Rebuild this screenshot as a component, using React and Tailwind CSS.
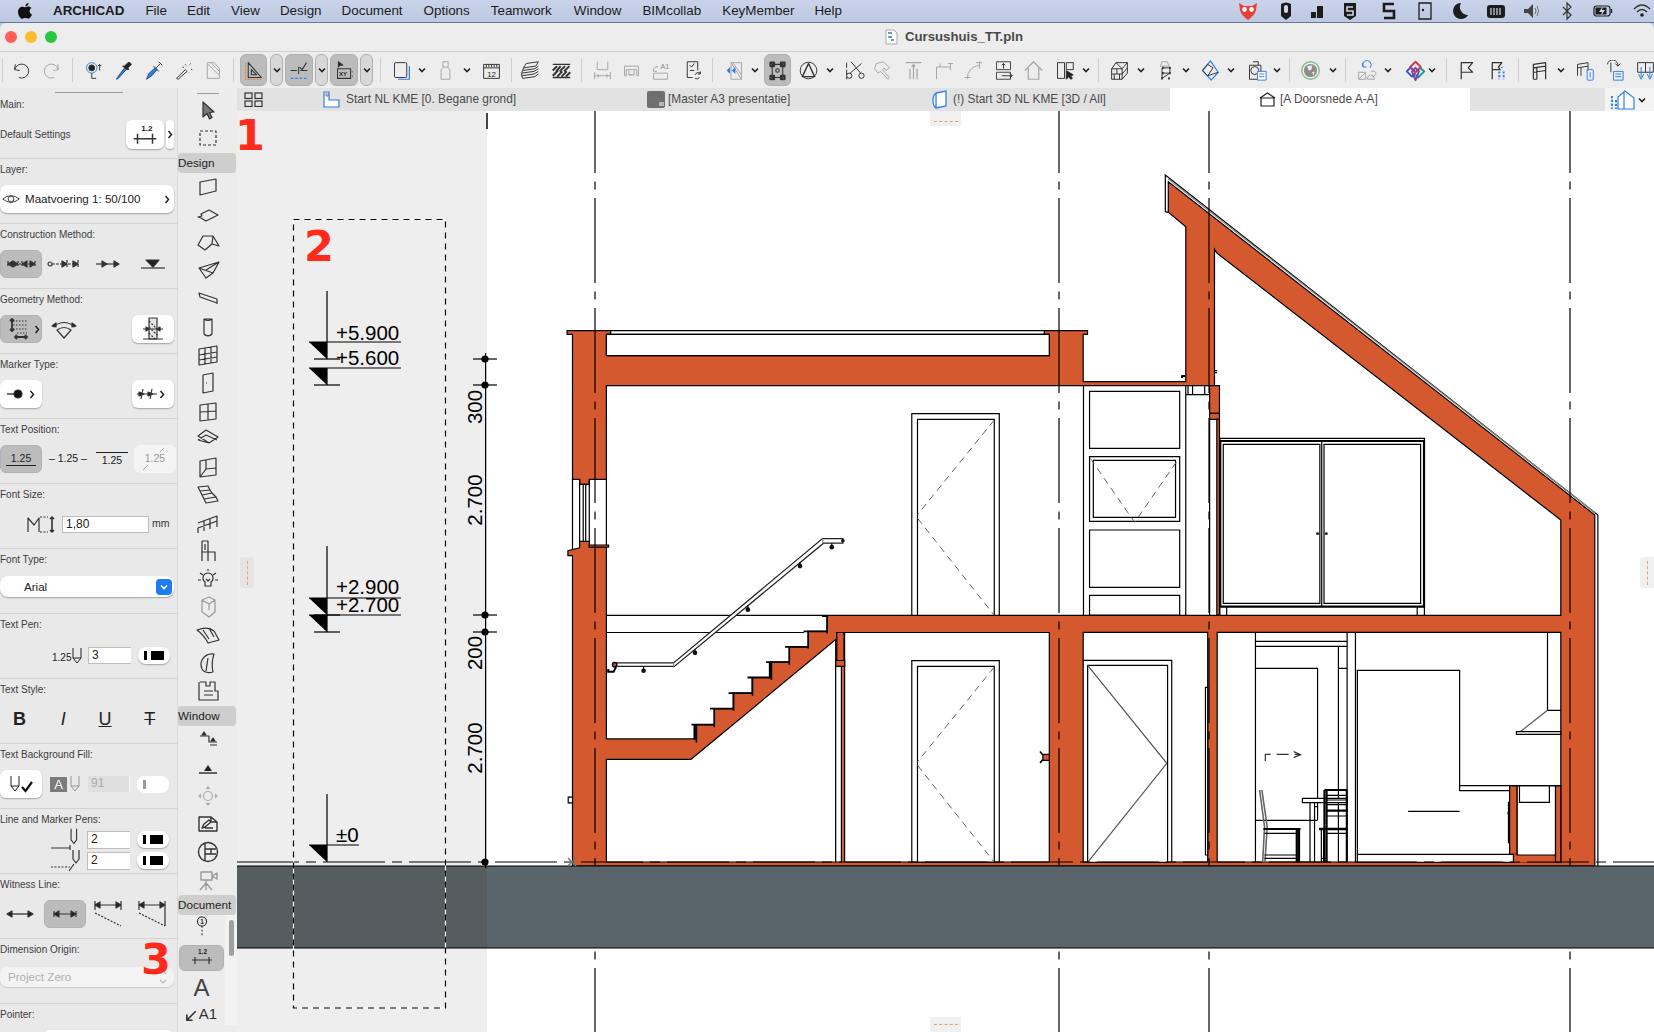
import React from "react";

const F = "font-['Liberation_Sans',Arial,sans-serif]";
const Z8 = "matrix(.357143 0 0 .357143 560 320)";
const Z9 = "matrix(.378788 0 0 .333333 1060 160)";
const Z10 = "matrix(.378788 0 0 .333333 1060 600)";
const OR = "#d4592f";

const Ic = ({ children, s = 24, vb = 24, w = 1.2, className = "" }) => (
  <svg width={s} height={s} viewBox={`0 0 ${vb} ${vb}`} fill="none" stroke="#333" strokeWidth={w} strokeLinejoin="round" className={`shrink-0 ${className}`}>
    {children}
  </svg>
);
const Chev = ({ ml = "" }) => (
  <svg width="10" height="10" viewBox="0 0 10 10" fill="none" stroke="#222" strokeWidth="1.6" className={`shrink-0 ${ml}`}><path d="M2 3.5 L5 6.5 L8 3.5" /></svg>
);
const Sep = ({ ml = "" }) => <div className={`w-px h-[24px] bg-[#cfcfcf] shrink-0 ${ml}`} />;
const G = "#a6a6a6";
const B = "#2f7fe6";

const I = {
  undo: <path d="M5 5 L4 11 L10 12 M4.5 10.5 A8 8 0 1 1 9 20" />,
  redo: <path stroke={G} d="M19 5 L20 11 L14 12 M19.5 10.5 A8 8 0 1 0 15 20" />,
  mag: <><circle cx="10" cy="9" r="6" stroke={B} /><circle cx="10" cy="9" r="3.4" fill="#222" /><path d="M10 15 V21 H15 M19 5 V12 M17 7 L19 5 L21 7" /></>,
  drop: <><path d="M5 20 L4 22 L6 21 L16 10 L14 8 Z" fill={B} stroke="#1d4f92" /><path d="M13 7 L17 3 Q20 2 21 5 L17 9 L18 11 L16 11 L11 7 Z" fill="#222" /></>,
  syr: <><path d="M4 22 L7 15 L14 9 L16 11 L10 18 Z" fill={B} stroke="#1d4f92" /><path d="M12 7 L18 13 M15 9 L20 4 M18 2 L22 6" /></>,
  wand: <><path d="M4 21 L14 11 L16 13 L6 22 Z" /><path strokeDasharray="1.5 2" d="M14 5 L16 8 M20 4 L18 7 M22 11 L19 10 M11 8 L14 9" /></>,
  pin: <path stroke={G} d="M6 4 V21 H20 V10 L14 3 H6 M6 4 L20 18 M10 3 L20 13" />,
  tri: <><path d="M6 3 V20 H21 Z M9.5 11 V16.8 H15.5 Z" /><path stroke="#e8772e" strokeDasharray="2 1.5" d="M3 3 V22 H22" /></>,
  snap: <><path d="M2 12 H9 M13 12 H21 M11 8 V16 M12 8 L15 11 L20 3" /><path stroke={B} strokeDasharray="3 2" d="M2 21 H22" /></>,
  xy: <><path d="M5 2 V8 L7 6 L10 6 Z" fill="#222" /><rect x="4" y="10" width="15" height="11" /><text x="5.6" y="18.5" fontSize="7" fontWeight="700" fontFamily="Liberation Sans" fill="#222" stroke="none">XY</text><path d="M21 13 V14 M21 18 V19" /></>,
  sq: <><rect x="4" y="3" width="14" height="17" rx="1.5" /><path stroke={B} strokeWidth="1.4" d="M21 7 V22 H8" /></>,
  pers: <path stroke={G} d="M9 2 H15 V8 H9 Z M10 8 L7 11 V22 H17 V11 L14 8" />,
  rul: <><rect x="3" y="5" width="18" height="16" /><path d="M3 9 H21 M6 5 V8 M9 5 V8 M12 5 V8 M15 5 V8 M18 5 V8" /><text x="7" y="19" fontSize="9" fontFamily="Liberation Sans" fill="#222" stroke="none">12</text></>,
  lay: <path d="M7 4 L21 2 L18 7 L4 9 Z M4 9 L3 12 L17 10 L21 7 M3 12 L2 15 L16 13 L21 10 M2 15 L2 18 L16 16 L21 13 M2 18 L3 21 L17 19 L21 16" />,
  hat: <><path strokeWidth="1.5" d="M2 5 H22 M2 20 H22" /><path strokeWidth="2.4" d="M2 12 L7 7 M6 13 L11 7 M10 13 L16 7 M15 13 L21 7 M2 18 L8 12 M7 19 L13 13 M12 19 L18 13 M17 19 L22 14" /></>,
  g1: <path stroke={G} d="M6 2 V11 H18 V2 M3 18 H21 M3 14 V22 M21 14 V22 M7 16 V20 M17 16 V20" />,
  g2: <path stroke={G} d="M4 7 H20 V18 H18 V11 H6 V18 H4 Z M9 12 V17 H15 V12 M9 17 H15" />,
  g3: <><path stroke={G} d="M4 15 H20 V22 H4 Z M4 10 L8 7 M4 10 L4 13 H8 M8 7 V9" /><text x="12" y="10" fontSize="8" fontFamily="Liberation Sans" fill="#888" stroke="none">A1</text></>,
  note: <><path d="M6 2 H18 V12 M6 2 V20 H12" /><path d="M9 6 L11 8 L14 4 M9 12 H14 M15 17 A4 4 0 0 1 21 15 M21 13 V16 H18 M20 20 A4 4 0 0 1 15 21" /></>,
  mir: <><path stroke={G} d="M8 3 H20 V22 H8 Z M8 3 L20 22 M10 3 L20 17" /><path d="M3 12 L7 8 V16 Z M9 12 L13 8 V16 Z" fill={B} stroke="none" /></>,
  nod: <><rect x="6" y="5" width="12" height="15" /><circle cx="12" cy="12" r="2" /><path strokeWidth="2.5" d="M4 3 H8 V7 H4 Z M16 3 H20 V7 H16 Z M4 18 H8 V22 H4 Z M16 18 H20 V22 H16 Z" /></>,
  circ: <><circle cx="12" cy="12" r="9.5" /><path strokeWidth="1.6" d="M12 4 L5 19 H19 Z" /></>,
  sci: <><path d="M3 3 V22" strokeDasharray="6 2" /><path d="M8 2 L19 15 M20 4 L7 15" /><circle cx="20" cy="18" r="3" /><circle cx="6" cy="18" r="3" /></>,
  ham: <path stroke={G} d="M5 4 L13 2 L20 9 L16 12 L14 9 L12 11 L20 20 L18 22 L10 13 L7 15 L3 10 Z" />,
  fan: <path stroke={G} strokeWidth="1.4" d="M3 3 H21 M12 5 V22 M8 10 V22 M16 10 V22 M12 5 L10 8 M12 5 L14 8" />,
  cor: <path stroke={G} d="M4 22 V8 H20 M8 8 V4 M20 4 V12 M17 4 H23" />,
  arc: <path stroke={G} d="M6 22 Q6 8 20 6 M20 2 V10 M16 3 L23 3 M3 20 H10" />,
  ext: <><path stroke="#444" d="M4 2 H20 V11 H4 Z M4 14 H20 V22 H4 Z" /><path d="M12 10 V4 M10 6 L12 4 L14 6 M10 18 H22 M19 15 L22 18 L19 21" /></>,
  hou: <path stroke={G} strokeWidth="1.4" d="M2 12 L12 2 L22 12 M6 9 V22 H18 V9" />,
  pick: <><path d="M4 3 H12 V21 H4 Z M14 3 H22 V11 H14 Z" /><path d="M14 12 V22 L17 19 L19 22 L21 21 L19 18 L22 17 Z" fill="#222" /></>,
  brick: <path d="M3 10 L8 3 H21 V15 L15 22 H3 Z M3 10 H15 V22 M15 10 L21 3 M3 16 H15 M9 10 V16 M6 16 V22 M12 16 V22 M15 16 L21 9 M8 3 L15 10" />,
  morph: <><path stroke={G} d="M8 2 L14 2 L16 7 H6 Z" /><path strokeWidth="2.4" d="M8 9 H10 M16 9 H18 M8 15 H10 M16 15 H18 M7 21 H9 M15 21 H17" /><path d="M8 9 L8 21 M17 9 V15 M8 9 H17 M8 15 H17 M8 21 L17 15" /></>,
  dia: <><path stroke={B} strokeWidth="1.4" d="M13 1 L22 14 L14 23 L4 12 Z" /><path d="M4 12 L10 5 L16 9 L10 18 Z M10 18 L22 14" /></>,
  cam: <><path d="M8 2 H14 V6 M4 6 H17 V22 H4 Z" /><circle cx="10" cy="12" r="4.5" /><rect x="13" y="13" width="10" height="10" fill="#fff" stroke={B} /><path stroke={B} d="M15 16 H21 M15 19 H21" /></>,
  glob: <><circle cx="12" cy="12" r="10" stroke="#7fbf8f" strokeWidth="1.5" /><circle cx="12" cy="12" r="7.5" fill="#8d8d8d" stroke="none" /><path fill="#eee" stroke="none" d="M8 7 L14 6 L13 11 L10 12 Z M14 14 L17 13 L15 18 Z" /></>,
  rot: <><path stroke={G} d="M3 14 H11 V22 H3 Z M3 22 L11 14 M17 14 A3 3 0 1 1 17 17 A5 5 0 0 1 21 22 H13 A5 5 0 0 1 16 17" /><path stroke={B} d="M8 8 A5 5 0 1 1 16 9 M8 3 V8 H12" /></>,
  bim: <><path stroke="#d8344a" strokeWidth="2.2" d="M12 2 L18 8 L12 14 L6 8 Z" /><path stroke="#3b56c8" strokeWidth="2.2" d="M7 8 L2 13 L8 19 L12 15" /><path stroke="#19a08a" strokeWidth="2.2" d="M17 9 L22 13 L15 20 L12 17" /><path stroke="#7a3fb0" strokeWidth="2.2" d="M8 13 L12 9 L16 13 L12 23 Z" /></>,
  flag: <path strokeWidth="1.4" d="M6 22 V3 H19 L14 9 L19 14 H6" />,
  flag2: <><path strokeWidth="1.4" d="M6 22 V3 H17 L13 8 L15 11 H6" /><path stroke={B} strokeWidth="2.2" strokeDasharray="2.4 1.8" d="M14 13 V22 M19 13 V22 M17 8 V9" /></>,
  shelf: <path strokeWidth="1.4" d="M5 22 V5 L19 3 V22 M5 9 L19 7 M5 14 L19 12 M9 22 V8 M5 22 H9" />,
  shelf2: <><path d="M4 18 V5 L16 3 V12 M4 9 L16 7 M8 18 V8" /><rect x="15" y="11" width="7" height="12" rx="1" stroke={B} /><path stroke={B} d="M18.5 14 V20" /></>,
  rf: <><path d="M9 3 V14 M5 5 A6 6 0 0 1 17 7 M14 4 L17 7 L20 4" /><rect x="12" y="13" width="11" height="10" stroke={B} /><path stroke={B} d="M14 16 H21 M14 19 H21" /></>,
  shv: <><path d="M3 3 H21 V14 H3 Z M12 3 V14" /><path stroke={B} d="M4 16 L7 22 L10 16 M14 16 L17 22 L20 16 M7 8 V20 M17 8 V20" /></>,
};
const sel = "bg-[#bcbcbc] rounded-[6px] border border-[#b0b0b0] h-[32px] flex items-center justify-center shrink-0";
const TB = ({ n, ml = "" }) => <div className={`w-[24px] flex justify-center shrink-0 ${ml}`}><Ic s={21} w={1.1}>{I[n]}</Ic></div>;

function Toolbar() {
  return (
    <div className="h-[36px] bg-[#ededed] flex items-center overflow-hidden">
      <Sep ml="ml-[2px]" /><TB n="undo" ml="ml-[6px]" /><TB n="redo" ml="ml-[6px]" /><Sep ml="ml-[9px]" />
      <TB n="mag" ml="ml-[8px]" /><TB n="drop" ml="ml-[6px]" /><TB n="syr" ml="ml-[6px]" /><TB n="wand" ml="ml-[6px]" /><TB n="pin" ml="ml-[5px]" /><Sep ml="ml-[9px]" />
      <div className={`${sel} w-[27px] ml-[6px]`}><Ic s={21}>{I.tri}</Ic></div>
      <div className={`${sel} w-[13px] ml-[3px] bg-[#d8d8d8]`}><Chev /></div>
      <div className={`${sel} w-[28px] ml-[2px]`}><Ic s={21}>{I.snap}</Ic></div>
      <div className={`${sel} w-[13px] ml-[2px] bg-[#d8d8d8]`}><Chev /></div>
      <div className={`${sel} w-[28px] ml-[2px]`}><Ic s={21}>{I.xy}</Ic></div>
      <div className={`${sel} w-[13px] ml-[2px] bg-[#d8d8d8]`}><Chev /></div>
      <Sep ml="ml-[7px]" />
      <TB n="sq" ml="ml-[8px]" /><Chev ml="ml-[4px]" /><TB n="pers" ml="ml-[6px]" /><Chev ml="ml-[5px]" /><TB n="rul" ml="ml-[7px]" /><Sep ml="ml-[8px]" />
      <TB n="lay" ml="ml-[6px]" /><TB n="hat" ml="ml-[7px]" /><Sep ml="ml-[8px]" />
      <TB n="g1" ml="ml-[8px]" /><TB n="g2" ml="ml-[5px]" /><TB n="g3" ml="ml-[5px]" /><TB n="note" ml="ml-[8px]" /><Sep ml="ml-[8px]" />
      <TB n="mir" ml="ml-[9px]" /><Chev ml="ml-[4px]" />
      <div className={`${sel} w-[27px] ml-[4px]`}><Ic s={21}>{I.nod}</Ic></div>
      <TB n="circ" ml="ml-[5px]" /><Chev ml="ml-[5px]" />
      <TB n="sci" ml="ml-[7px]" /><TB n="ham" ml="ml-[4px]" /><TB n="fan" ml="ml-[7px]" /><TB n="cor" ml="ml-[6px]" /><TB n="arc" ml="ml-[5px]" /><TB n="ext" ml="ml-[7px]" /><TB n="hou" ml="ml-[6px]" /><TB n="pick" ml="ml-[7px]" /><Chev ml="ml-[5px]" /><Sep ml="ml-[7px]" />
      <TB n="brick" ml="ml-[8px]" /><Chev ml="ml-[5px]" /><TB n="morph" ml="ml-[7px]" /><Chev ml="ml-[4px]" /><TB n="dia" ml="ml-[6px]" /><Chev ml="ml-[5px]" /><TB n="cam" ml="ml-[8px]" /><Chev ml="ml-[4px]" /><Sep ml="ml-[7px]" />
      <TB n="glob" ml="ml-[8px]" /><Chev ml="ml-[6px]" /><Sep ml="ml-[7px]" />
      <TB n="rot" ml="ml-[8px]" /><Chev ml="ml-[5px]" /><TB n="bim" ml="ml-[10px]" /><Chev /><Sep ml="ml-[9px]" />
      <TB n="flag" ml="ml-[7px]" /><TB n="flag2" ml="ml-[7px]" /><Sep ml="ml-[9px]" />
      <TB n="shelf" ml="ml-[8px]" /><Chev ml="ml-[5px]" /><TB n="shelf2" ml="ml-[6px]" /><TB n="rf" ml="ml-[5px]" /><TB n="shv" ml="ml-[8px]" />
    </div>
  );
}

function MenuBar() {
  const items = [["File", "ml-[21px]"], ["Edit", "ml-[20px]"], ["View", "ml-[21px]"], ["Design", "ml-[20px]"], ["Document", "ml-[20px]"], ["Options", "ml-[21px]"], ["Teamwork", "ml-[21px]"], ["Window", "ml-[22px]"], ["BIMcollab", "ml-[21px]"], ["KeyMember", "ml-[21px]"], ["Help", "ml-[20px]"]];
  const S = ({ children, ml }) => <svg width="20" height="20" viewBox="0 0 20 20" className={`shrink-0 ${ml}`} fill="#1c1c1c" stroke="none">{children}</svg>;
  return (
    <div className={`h-[23px] bg-gradient-to-b from-[#c9d3e9] to-[#bdc9e2] border-b border-[#6f7892] flex items-center text-[13.4px] text-[#1c1c1c] overflow-hidden ${F}`}>
      <svg width="16" height="18" viewBox="0 0 16 18" className="ml-[17px] shrink-0" fill="#111"><path d="M11.5 1 C11.6 2.6 10.2 4.4 8.4 4.3 C8.3 2.7 9.9 1.1 11.5 1 Z M8.3 5.2 C9.2 5.2 10.2 4.4 11.6 4.5 C12.7 4.5 13.8 5.1 14.4 6.1 C11.7 7.7 12.2 11.4 15 12.5 C14.4 14 12.9 16.8 11.3 16.8 C10.2 16.8 9.6 16.1 8.3 16.1 C7 16.1 6.4 16.8 5.3 16.8 C3.3 16.8 1 12.9 1 9.9 C1 6.8 3.1 4.7 5.1 4.7 C6.4 4.7 7.4 5.2 8.3 5.2 Z" /></svg>
      <span className="ml-[20px] font-bold text-[13.4px]">ARCHICAD</span>
      {items.map(([t, m]) => <span key={t} className={m}>{t}</span>)}
      <div className="flex-1" />
      <div className="flex items-center pr-[2px]">
        <S><path fill="#ee3b33" d="M1 2 L6 5 H14 L19 2 L18 9 Q17 14 10 19 Q3 14 2 9 Z" /><circle cx="6.5" cy="8.5" r="2.4" fill="#fff" /><circle cx="13.5" cy="8.5" r="2.4" fill="#fff" /></S>
        <S ml="ml-[18px]"><path d="M5 3 Q10 0 15 3 V15 L10 19 L5 15 Z" /><rect x="8" y="4" width="4" height="8" rx="2" fill="#ccd6ea" /></S>
        <S ml="ml-[11px]"><path d="M4 11 H9 V17 H4 Z M10 5 H16 V17 H10 Z M10 11 L16 5 V11 Z" /></S>
        <S ml="ml-[13px]"><path d="M4 2 H16 V15 L10 19 L4 15 Z" /><path stroke="#ccd6ea" strokeWidth="1.6" fill="none" d="M13 6 H7 V10 H13 V14 H7" /></S>
        <S ml="ml-[19px]"><path fill="none" stroke="#1c1c1c" strokeWidth="2.6" d="M15 3 H5 V10 H15 V17 H5" /></S>
        <S ml="ml-[16px]"><path fill="none" stroke="#1c1c1c" strokeWidth="1.3" d="M4 2 H16 V18 H4 Z" /><circle cx="8" cy="9" r="1.2" /></S>
        <S ml="ml-[15px]"><path d="M11 2 A8 8 0 1 0 18 14 A8 8 0 0 1 11 2 Z" /></S>
        <S ml="ml-[16px]"><rect x="1" y="4" width="18" height="13" rx="3" /><path stroke="#ccd6ea" strokeWidth="1.2" d="M5 7 V14 M8 7 V14 M11 7 V14 M14 7 V14" /></S>
        <S ml="ml-[16px]"><path fill="#444" d="M2 8 H6 L11 3 V17 L6 12 H2 Z" /><path fill="none" stroke="#777" d="M13 7 Q15 10 13 13 M15 5 Q18 10 15 15" /></S>
        <S ml="ml-[15px]"><path fill="none" stroke="#333" strokeWidth="1.2" d="M6 6 L14 14 L10 18 V2 L14 6 L6 14" /></S>
        <S ml="ml-[16px]"><rect x="1" y="5" width="16" height="10" rx="2.5" fill="none" stroke="#1c1c1c" strokeWidth="1.2" /><rect x="2.5" y="6.5" width="11" height="7" /><path fill="#ccd6ea" d="M10 5 L6 11 H9 L8 15 L12 9 H9 Z" /><rect x="18" y="8" width="1.2" height="4" /></S>
        <S ml="ml-[19px]"><path fill="none" stroke="#333" strokeWidth="1.6" d="M2 8 Q10 0 18 8 M5 11 Q10 6 15 11" /><circle cx="10" cy="14" r="1.8" /></S>
      </div>
    </div>
  );
}

const Lab = ({ children }) => <div className="h-[22px] pt-[5px] text-[10px] leading-[12px] text-[#3c3c3c] whitespace-nowrap">{children}</div>;
const Sec = ({ label, children, body = "mt-[4px] h-[28px] flex items-center" }) => (
  <div className="h-[65px] border-b border-[#d2d2d2] shrink-0">
    <Lab>{label}</Lab>
    <div className={body}>{children}</div>
  </div>
);
const wb = "bg-white rounded-[6px] shadow-[0_1px_1.5px_rgba(0,0,0,0.3)] flex items-center justify-center shrink-0";
const sb = "bg-[#bcbcbc] rounded-[6px] border border-[#b2b2b2] flex items-center justify-center shrink-0";
const inp = "bg-white border-t border-b border-[#bdbdbd] text-[12px] text-[#222] leading-[14px] pl-[3px] shrink-0";
const Pen = ({ ml = "ml-[7px]", off }) => (
  <div className={`${wb} w-[32px] h-[17px] rounded-[8px] gap-[4px] ${ml} ${off ? "bg-[#f0f0f0] shadow-none" : ""}`}>
    <div className={`w-[3px] h-[9px] ${off ? "bg-[#999]" : "bg-black"}`} />
    <div className={`w-[13px] h-[9px] ${off ? "bg-white" : "bg-black"}`} />
  </div>
);

function Panel() {
  return (
    <div className={`w-[178px] shrink-0 bg-[#e9e9e9] border-r border-[#dcdcdc] overflow-hidden ${F}`}>
      <div className="h-[6px] flex justify-center"><div className="mt-[4px] w-[68px] h-px bg-[#9c9c9c]" /></div>
      <Sec label="Main:" body="mt-[4px] h-[29px] flex items-center">
        <span className="text-[10px] text-[#3c3c3c] w-[126px]">Default Settings</span>
        <div className={`${wb} w-[38px] h-[29px]`}><Ic s={30}><text x="9" y="9" fontSize="6.5" fontWeight="700" fontFamily="Liberation Sans" fill="#222" stroke="none">1.2</text><path d="M3 15 H21 M6 11 V19 M18 11 V19" /></Ic></div>
        <div className={`${wb} w-[8px] h-[29px] ml-[2px]`}><Chev2 /></div>
      </Sec>
      <Sec label="Layer:">
        <div className={`${wb} w-[174px] h-[28px] justify-start rounded-[7px]`}>
          <Ic s={18} className="ml-[2px]"><path d="M1 12 Q12 3 23 12 Q12 21 1 12 Z" /><circle cx="12" cy="12" r="3.8" /></Ic>
          <span className="ml-[5px] text-[11.6px] text-[#222] whitespace-nowrap">Maatvoering 1: 50/100</span>
          <div className="flex-1" /><Chev2 cl="mr-[4px]" />
        </div>
      </Sec>
      <Sec label="Construction Method:">
        <div className={`${sb} w-[42px] h-[28px]`}><Ic s={34} vb={34}><path d="M3 17 H31 M4 14 V20 M14 14 V20 M18 14 V20 M31 14 V20" strokeDasharray="2 1" /><path fill="#333" d="M4 17 L9 14 V20 Z M14 17 L9 14 V20 Z M18 17 L23 14 V20 Z M31 17 L26 14 V20 Z" /></Ic></div>
        <Ic s={34} vb={34} className="ml-[5px]"><circle cx="3" cy="17" r="2" /><path d="M5 17 H30 M20 13 V21 M31 13 V21" strokeDasharray="3 1" /><path fill="#333" d="M20 17 L15 14 V20 Z M31 17 L26 14 V20 Z" /></Ic>
        <Ic s={26} vb={26} className="ml-[14px]"><path d="M1 13 H24" /><path fill="#333" d="M12 13 L7 10 V16 Z M24 13 L19 10 V16 Z" /></Ic>
        <Ic s={26} vb={26} className="ml-[19px]"><path d="M1 17 H25" /><path fill="#222" d="M6 9 H19 L13 16 Z" /></Ic>
      </Sec>
      <Sec label="Geometry Method:">
        <div className={`${sb} w-[42px] h-[28px] justify-start`}><Ic s={26} vb={26} className="ml-[6px]"><path strokeDasharray="1.5 1.5" d="M6 5 H20 M6 9 H20 M6 13 H20 M10 17 H20" /><path strokeWidth="1.8" d="M5 3 V15 M3 5 L5 3 L7 5 M3 13 L5 15 L7 13 M8 21 H20 M10 19 L8 21 L10 23 M18 19 L20 21 L18 23" /></Ic><Chev2 cl="ml-[1px]" /></div>
        <Ic s={26} vb={26} className="ml-[9px]"><path d="M2 11 Q13 2 24 11 M6 14 L13 22 L20 14 Q13 9 6 14 Z" /><path fill="#222" d="M1 10 L5 7 L5 11 Z M25 10 L21 7 L21 11 Z" /></Ic>
        <div className="ml-[55px]"><div className={`${wb} w-[42px] h-[28px]`}><Ic s={26} vb={26}><path d="M9 2 H17 V23 H9 Z" fill="#e5e5e5" /><path strokeDasharray="2 1.5" d="M9 5 L17 13 M9 11 L17 19 M9 17 L15 23" /><path d="M3 23 H23 M3 13 H23" /><path fill="#222" d="M9 13 L6 11 V15 Z M17 13 L20 11 V15 Z" /></Ic></div></div>
      </Sec>
      <Sec label="Marker Type:">
        <div className={`${wb} w-[42px] h-[28px] justify-start`}><Ic s={20} vb={20} className="ml-[6px]"><path strokeWidth="1.4" d="M1 10 H10" /><circle cx="12" cy="10" r="4" fill="#111" /></Ic><Chev2 cl="ml-[3px]" /></div>
        <div className="ml-[90px]"><div className={`${wb} w-[42px] h-[28px] justify-start`}><Ic s={24} vb={24} className="ml-[3px]"><path d="M2 12 H22 M8 7 L6 17 M17 7 L15 17" /><path fill="#222" d="M9 12 L4 10 V14 Z M18 12 L13 10 V14 Z" /></Ic><Chev2 /></div></div>
      </Sec>
      <Sec label="Text Position:">
        <div className={`${sb} w-[42px] h-[28px] flex-col text-[10.5px] text-[#222] leading-[10px]`}><span>1.25</span><div className="w-[30px] h-px bg-[#222] mt-[2px]" /></div>
        <span className="ml-[7px] text-[10.5px] text-[#222] whitespace-nowrap">– 1.25 –</span>
        <div className="ml-[9px] flex flex-col items-center text-[10.5px] text-[#222] leading-[11px]"><div className="w-[32px] h-px bg-[#222] mb-[2px]" /><span>1.25</span></div>
        <div className="ml-[6px] w-[42px] h-[28px] rounded-[6px] bg-[#f4f4f4] shrink-0 relative flex items-center justify-center text-[10.5px] text-[#999]"><span>1.25</span><svg className="absolute inset-0" width="42" height="28" viewBox="0 0 42 28" stroke="#aaa"><path d="M30 3 L26 7 M14 20 L9 25" /></svg></div>
      </Sec>
      <Sec label="Font Size:">
        <Ic s={30} vb={30} className="ml-[26px]"><path d="M2 23 V9 L8 16 L13 9 V23" /><path strokeDasharray="2 1.5" d="M14 8 H22 M14 23 H22" /><path strokeWidth="1.6" d="M26 8 V23 M24 10 L26 8 L28 10 M24 21 L26 23 L28 21" /></Ic>
        <div className={`${inp} w-[87px] h-[17px] ml-[6px] border-l border-r`}>1,80</div>
        <span className="ml-[3px] text-[10.5px] text-[#333]">mm</span>
      </Sec>
      <Sec label="Font Type:" body="mt-[5px] h-[21px] flex items-center">
        <div className={`${wb} w-[174px] h-[21px] justify-start rounded-[8px] text-[11.6px] text-[#222]`}>
          <span className="ml-[24px]">Arial</span><div className="flex-1" />
          <div className="w-[16px] h-[16px] mr-[2px] rounded-[4px] bg-[#1f7cf0] flex items-center justify-center"><svg width="10" height="10" viewBox="0 0 10 10" fill="none" stroke="#fff" strokeWidth="1.6"><path d="M2 3.5 L5 6.5 L8 3.5" /></svg></div>
        </div>
      </Sec>
      <Sec label="Text Pen:" body="mt-[11px] h-[17px] flex items-center">
        <span className="ml-[52px] w-[18px] text-[10px] text-[#222] mt-[3px]">1.25</span>
        <PenIcon cl="ml-[1px]" />
        <div className={`${inp} w-[43px] h-[17px] ml-[5px] border-l`}>3</div>
        <Pen />
      </Sec>
      <Sec label="Text Style:" body="mt-[9px] h-[18px] flex items-center text-[#222]">
        <span className="w-[40px] text-center text-[18px] font-bold leading-[18px]">B</span>
        <span className="w-[50px] text-center text-[18px] italic leading-[18px]">I</span>
        <span className="w-[36px] text-center text-[18px] underline leading-[18px]">U</span>
        <span className="w-[56px] text-center text-[18px] line-through leading-[18px]">T</span>
      </Sec>
      <Sec label="Text Background Fill:" body="mt-[4px] h-[28px] flex items-center">
        <div className={`${wb} w-[42px] h-[28px]`}><PenIcon /><svg width="12" height="12" viewBox="0 0 12 12" fill="none" stroke="#111" strokeWidth="2.2" className="mt-[5px]"><path d="M1 6 L4.5 10 L11 1" /></svg></div>
        <div className="ml-[8px] w-[17px] h-[15px] bg-[#7b7b7b] text-white text-[13px] leading-[15px] text-center shrink-0">A</div>
        <PenIcon cl="ml-[2px] opacity-40" />
        <div className="ml-[7px] w-[42px] h-[16px] bg-[#dfdfdf] border-r border-[#f5f5f5] text-[12px] leading-[15px] text-[#aaa] pl-[3px] shrink-0">91</div>
        <Pen off />
      </Sec>
      <Sec label="Line and Marker Pens:" body="-mt-[2px] h-[42px] flex flex-col">
        <div className="h-[21px] flex items-center">
          <Ic s={30} vb={30} className="ml-[50px] mt-[2px]"><path d="M1 22 H20 M20 19 V24" /><path d="M24 3 V15 L27 19 L30 15 V3" transform="translate(-1 0) scale(.92)" /></Ic>
          <div className={`${inp} w-[43px] h-[18px] ml-[7px] border-l`}>2</div>
          <Pen />
        </div>
        <div className="h-[21px] flex items-center">
          <Ic s={30} vb={30} className="ml-[50px]"><path strokeDasharray="2 1.5" d="M1 21 H20" /><path d="M19 25 L24 18 M23 4 V13 L26 17 L29 13 V4" /></Ic>
          <div className={`${inp} w-[43px] h-[18px] ml-[7px] border-l`}>2</div>
          <Pen />
        </div>
      </Sec>
      <Sec label="Witness Line:">
        <Ic s={30} vb={30} className="ml-[5px]"><path strokeWidth="1.3" d="M3 15 H27" /><path fill="#222" d="M2 15 L7 12 V18 Z M28 15 L23 12 V18 Z" /></Ic>
        <div className={`${sb} w-[42px] h-[28px] ml-[9px]`}><Ic s={28} vb={28}><path d="M3 14 H25 M3 11 V17 M25 11 V17" /><path fill="#222" d="M3 14 L8 11 V17 Z M25 14 L20 11 V17 Z" /></Ic></div>
        <Ic s={28} vb={28} className="ml-[8px]"><path d="M1 5 H27 M1 1 V10 M27 1 V10" /><path fill="#222" d="M1 5 L6 2 V8 Z M27 5 L22 2 V8 Z" /><path strokeDasharray="2 1.5" d="M1 13 L27 26" /></Ic>
        <Ic s={28} vb={28} className="ml-[16px]"><path d="M1 5 H27 M1 1 V10 M27 1 V26" /><path fill="#222" d="M1 5 L6 2 V8 Z M27 5 L22 2 V8 Z" /><path strokeDasharray="2 1.5" d="M1 13 L27 26" /></Ic>
      </Sec>
      <Sec label="Dimension Origin:" body="mt-[6px] h-[20px] flex items-center">
        <div className="w-[174px] h-[20px] rounded-[7px] bg-[#f3f3f3] shadow-[0_1px_1px_rgba(0,0,0,0.15)] flex items-center text-[11.6px] text-[#b0b0b0]">
          <span className="ml-[8px]">Project Zero</span><div className="flex-1" />
          <svg width="10" height="16" viewBox="0 0 10 16" fill="none" stroke="#bbb" strokeWidth="1.2" className="mr-[6px]"><path d="M2 5 L5 2 L8 5 M2 11 L5 14 L8 11" /></svg>
        </div>
      </Sec>
      <Sec label="Pointer:" body="mt-[4px] h-[28px] flex items-center"><div className={`${wb} ml-[44px] w-[130px] h-[28px]`} /></Sec>
    </div>
  );
}
function Chev2({ cl = "" }) {
  return <svg width="6" height="9" viewBox="0 0 6 9" fill="none" stroke="#222" strokeWidth="1.5" className={`shrink-0 ${cl}`}><path d="M1.5 1 L4.5 4.5 L1.5 8" /></svg>;
}
function PenIcon({ cl = "" }) {
  return <svg width="12" height="18" viewBox="0 0 12 18" fill="none" stroke="#222" strokeWidth="1" className={`shrink-0 ${cl}`}><path d="M2 1 V11 L6 16 L10 11 V1 M2 11 H10" /></svg>;
}

const T = [
  <path fill="#777" d="M7 4 L7 19 L11 15.5 L13.5 21 L16 19.5 L13.5 14.5 L18 14 Z" />,
  <rect x="4" y="5" width="16" height="14" strokeDasharray="3 2" />,
];
const T1 = [
  "M4 7 L20 4 V16 L4 20 Z",
  "M2 14 L6 13 L5 11 L13 7 L22 12 L10 18 L5 15 Z",
  "M7 5 H17 L23 15 L16 13 L9 19 L2 14 Z M17 5 L16 13",
  "M3 9 L23 3 L17 14 L10 19 L3 9 L17 14 M23 3 L10 11",
  "M3 6 L21 12 V16 L4 10 Z M21 16 V17",
  "M8 4 H16 V19 Q12 23 8 19 Z M8 4 Q12 7 16 4",
  "M3 6 L21 3 V19 L3 22 Z M3 12 L21 9 M3 17 L21 14 M9 5 V21 M15 4 V20",
  "M7 4 L17 2 V20 L7 22 Z M10 12 H11",
  "M4 6 L20 4 V20 L4 22 Z M12 5 V21 M4 13 L20 12",
  "M2 9 L10 3 L22 10 L13 16 Z M2 13 L10 8 M13 16 L2 13 M10 8 L21 13",
  "M4 6 L20 3 V20 L4 22 Z M10 5 V14 L20 13 M10 14 L4 22",
  "M2 4 L12 3 L14 7 L4 8 Z M4 8 L6 12 L16 10 L14 7 M6 12 L8 16 L20 14 L16 10 M8 16 L10 20 L22 18 L20 14",
  "M2 12 L21 5 V10 L2 17 V22 M8 10 V20 M14 8 V18 M21 5 V16",
  "M6 2 H12 V13 H19 V22 M6 2 V22 M6 13 H19 M12 13 V22 M9 5 V11",
  "M12 6 A5 5 0 0 1 15 15 V19 H9 V15 A5 5 0 0 1 12 6 Z M12 2 V4 M4 6 L7 8 M20 6 L17 8 M2 13 H5 M22 13 H19 M10 12 L12 14 L14 12",
  "M6 5 L13 2 L19 5 V17 L13 22 L6 17 Z M6 5 L13 9 L19 5 M13 9 V15",
  "M1 7 Q12 3 18 8 L23 17 L12 20 Q8 12 1 7 Z M7 7 L13 16 M13 5 L18 14",
  "M6 9 Q10 2 18 3 Q15 12 17 21 Q9 23 6 18 Q4 13 6 9 Z M12 7 L10 20",
  "M4 3 H10 V7 H14 V3 H19 V12 H22 V21 H3 V3 M8 12 H17 M8 16 H17",
];
const T2 = [
  <><path d="M4 8 H13 V14 H21 M14 17 H21" /><path fill="#222" d="M6 7 L8 4 L10 7 Z M15 13 L17 10 L19 13 Z" /></>,
  <><path d="M3 17 H21" strokeWidth="1.5" /><path fill="#222" stroke="none" d="M8 15 L12 9 L16 15 Z" /></>,
  <><circle cx="12" cy="12" r="4.5" stroke="#aaa" /><path fill="#aaa" stroke="none" d="M12 2 L14.5 5 H9.5 Z M12 22 L14.5 19 H9.5 Z M2 12 L5 9.5 V14.5 Z M22 12 L19 9.5 V14.5 Z" /></>,
  <><path strokeWidth="1.4" d="M3 5 H15 L21 10 V19 H3 Z M15 5 V10 H21 M9 16 H17 M6 16 L8 12 L13 8 L15 10 L9 15 Z" /></>,
  <><circle cx="12" cy="12" r="9.5" strokeWidth="1.4" /><path strokeWidth="1.4" d="M9 3 V21 M9 9 H20 M9 14 H20 M15 9 V14" /></>,
  <path stroke="#999" strokeWidth="1.4" d="M5 4 H16 V12 H5 Z M16 8 L21 5 V11 Z M10 12 V15 L4 22 M10 15 V22 M10 15 L16 22" />,
];
const Slot = ({ children, h = "h-[28px]" }) => <div className={`${h} flex items-center justify-center`}>{children}</div>;
const Hd = ({ children }) => <div className="mt-[1px] h-[20px] bg-[#cecece] rounded-[4px] text-[11.7px] leading-[20px] text-[#222] whitespace-nowrap w-[58px]">{children}</div>;

function Toolbox() {
  return (
    <div className={`w-[59px] shrink-0 bg-[#ececec] overflow-hidden ${F}`}>
      <div className="h-[8px] flex justify-center"><div className="mt-[5px] w-[22px] h-px bg-[#9c9c9c]" /></div>
      {T.map((c, i) => <Slot key={i}><Ic s={24}>{c}</Ic></Slot>)}
      <Hd>Design</Hd>
      {T1.map((d, i) => <Slot key={i}><Ic s={24}><path d={d} stroke={i === 15 ? "#999" : "#333"} /></Ic></Slot>)}
      <Hd>Window</Hd>
      {T2.map((c, i) => <Slot key={i}><Ic s={24}>{c}</Ic></Slot>)}
      <Hd>Document</Hd>
      <div className="flex">
        <div className="w-[47px] flex flex-col items-center">
          <Slot h="h-[22px]"><Ic s={22}><circle cx="12" cy="7" r="5" /><text x="10.2" y="9.6" fontSize="7" fontFamily="Liberation Sans" fontWeight="700" fill="#222" stroke="none">1</text><path strokeDasharray="2 2" d="M12 12 V23" /></Ic></Slot>
          <div className={`${sb} mt-[8px] w-[45px] h-[26px] rounded-[6px]`}><Ic s={24}><text x="8" y="8" fontSize="6.5" fontWeight="700" fontFamily="Liberation Sans" fill="#222" stroke="none">1.2</text><path d="M2 14 H22 M5 11 V18 M19 11 V18" /></Ic></div>
          <div className="h-[32px] text-[24px] leading-[32px] text-[#444] pt-[1px]">A</div>
          <div className="h-[22px] flex items-center"><Ic s={13} vb={16}><path d="M2 14 L12 4 M1 8 V15 H8" fill="none" strokeWidth="2" /></Ic><span className="text-[15px] text-[#333]">A1</span></div>
        </div>
        <div className="w-[12px] bg-[#f2f2f2] flex justify-center"><div className="mt-[5px] w-[5px] h-[36px] rounded-[3px] bg-[#9f9f9f]" /></div>
      </div>
    </div>
  );
}

const Tab = ({ cl, children, text, gap = "ml-[3px]" }) => (
  <div className={`h-full flex items-center shrink-0 ${cl}`}>{children}<span className={`${gap} text-[11.9px] text-[#4a4a4a] whitespace-nowrap`}>{text}</span></div>
);

function Tabs() {
  return (
    <div className={`h-[23px] bg-[#e2e2e2] flex shrink-0 overflow-hidden ${F}`}>
      <div className="w-[33px] flex items-center justify-center shrink-0">
        <svg width="20" height="15" viewBox="0 0 20 15" fill="none" stroke="#333" strokeWidth="1.2"><rect x="1" y="1" width="7" height="5.5" /><rect x="11" y="1" width="7" height="5.5" /><rect x="1" y="9" width="7" height="5.5" /><rect x="11" y="9" width="7" height="5.5" /></svg>
      </div>
      <Tab cl="w-[370px] pl-[53px]" text="Start NL KME [0. Begane grond]" gap="ml-[6px]">
        <svg width="17" height="17" viewBox="0 0 17 17" fill="#fff" stroke="#2f7fe6" strokeWidth="1.2"><path d="M1 1 H6 V9 H16 V16 H1 Z" /><path d="M3 2 V5 H5 V2" stroke="#555" strokeWidth=".8" fill="none" /></svg>
      </Tab>
      <Tab cl="w-[285px] pl-[7px]" text="[Master A3 presentatie]">
        <svg width="18" height="17" viewBox="0 0 18 17"><rect x="0" y="0" width="18" height="17" rx="2" fill="#6f6f6f" /><path d="M12 14 H17 M12 12 H17" stroke="#fff" strokeWidth="1" /></svg>
      </Tab>
      <Tab cl="w-[245px] pl-[6px]" text="(!) Start 3D NL KME [3D / All]" gap="ml-[5px]">
        <svg width="17" height="19" viewBox="0 0 17 19" fill="#fff" stroke="#2f7fe6" strokeWidth="1.3"><path d="M5 3 L15 1 V16 L5 18 Q2 16 2 10 Q2 5 5 3 Z M5 3 V18" /></svg>
      </Tab>
      <Tab cl="w-[300px] pl-[89px] bg-white" text="[A Doorsnede A-A]" gap="ml-[4px]">
        <svg width="17" height="15" viewBox="0 0 17 15" fill="none" stroke="#222" strokeWidth="1.2"><path d="M1 6 L8.5 1 L16 6 M2 6 H15 V14 H2 Z" /></svg>
      </Tab>
      <div className="flex-1" />
      <div className="w-[49px] bg-[#f4f4f4] flex items-center shrink-0 pl-[4px]">
        <svg width="26" height="21" viewBox="0 0 26 21" fill="#fff" stroke="#2f7fe6" strokeWidth="1.2"><path d="M9 8 L16 2 L25 9 V20 H9 Z M15 3 V20" /><path strokeWidth="2" strokeDasharray="2.2 1.6" d="M3 7 V20 M7 11 V20" fill="none" /></svg>
        <Chev ml="ml-[2px]" />
      </div>
    </div>
  );
}

const R = ({ x, y, w, h, f = "#fff", ...p }) => <rect x={x} y={y} width={w} height={h} fill={f} {...p} />;
const L = ({ d, ...p }) => <path d={d} fill="none" {...p} />;
const Dash = { stroke: "#666", strokeDasharray: "7 5", strokeWidth: 1 };

const BIG = "M1168.3,181.7 L1594.8,515 V866 H572.5 V555.7 H567.9 V550.7 L579.6,547.9 V541.4 H589.3 V547 H606.4 V738.9 H695.7 V724.6 H714.3 V708.6 H733.2 V693.2 H752.1 V677.5 H770.7 V662.1 H789.3 V646.8 H808.2 V631.4 H827.1 V616.1 H822.5 V615.4 H1560.8 V520 L1217.2,253.3 L1214.5,249.3 V385.7 H606.4 V479.3 H589.3 V484.3 H579.6 V479.3 H572.5 V334.3 H567.1 V330.7 H610.7 V334.3 H606.4 V355.7 H1049.3 V334.3 H1044.3 V330.7 H1087.5 V334.3 H1083.2 V381.7 H1185.8 V226.7 L1168.3,212.3 Z";

function Drawing() {
  const Axis = ({ x }) => <line x1={x} y1="111" x2={x} y2="1032" stroke="#000" strokeWidth="1.2" strokeDasharray="85 8.5 8 8.5" strokeDashoffset="-87" />;
  const Lev = ({ y }) => (
    <g>
      <path d={`M309,${y} H327 V${y + 17} Z`} fill="#000" stroke="none" />
      <path d={`M314,${y + 17} H340`} />
    </g>
  );
  const Dot = ({ y, tick = true }) => (
    <g>
      <circle cx="485" cy={y} r="3.6" fill="#000" stroke="none" />
      {tick && <path d={`M473,${y} H497`} />}
    </g>
  );
  const Txt = { fontFamily: "Liberation Sans", fontSize: 20.5, fill: "#000", stroke: "none" };
  return (
    <svg viewBox="237 111 1417 921" className="absolute inset-0 w-full h-full [&_*]:[vector-effect:non-scaling-stroke]" stroke="#000" strokeWidth="1.2" fill="none">
      <rect x="237" y="111" width="250" height="921" fill="#eeeeee" stroke="none" />
      <path d={BIG} fill={OR} />
      <path d="M606.4,759.3 H691 L835.7,639.6 V862 H606.4 Z" fill="#fff" />
      <R x="844.6" y="632.5" w="204.7" h="229.5" stroke="#000" />
      <R x="1083.2" y="632.3" w="124.5" h="229.7" stroke="#000" />
      <R x="1217.2" y="632.3" w="343.6" h="229.7" stroke="#000" />
      <R x="835.7" y="666.4" w="5.7" h="195.6" stroke="#000" />
      <R x="835.7" y="660.4" w="9" h="6" f={OR} stroke="#000" />
      <R x="836.8" y="632.5" w="7.2" h="28" f={OR} stroke="#000" />
      <L d="M572.5,479.3 V550 M606.4,479.3 V547" />

      <g transform={Z8}>
        <R x="142" y="30" w="1214" h="10" stroke="#000" />
        <R x="130" y="40" w="1240" h="60" stroke="#000" />
        <L d="M55,446 V620 M65,460 V620 M72,460 V620 M82,446 V620 M55,460 H82" />
        <R x="82" y="630" w="54" h="6" f={OR} stroke="#000" />
        <L d="M130,827 H735 M130,875 H683" />
        <L strokeWidth="1.8" d="M368,1133 H432 M420,1088 H485 M472,1045 H538 M525,1001 H590 M577,958 H642 M630,915 H695 M682,872 H748 M735,829 H750" />
        <L strokeWidth="1.6" d="M382,1133 V1183 M376,1133 V1175 M432,1088 V1140 M486,1045 V1094 M539,1001 V1052 M592,958 V1008 M587,958 V1003 M642,915 V965 M695,872 V920 M748,829 V878" />
        <path d="M150,960 H318 L735,612 H792 V625 H738 L320,970 H150 Z" fill="#fff" stroke="#222" />
        <L stroke="#888" d="M318,960 V970 M736,612 V625" />
        <g fill="#111" stroke="none">
          <circle cx="234" cy="982" r="6.5" /><circle cx="378" cy="932" r="6.5" /><circle cx="526" cy="811" r="6.5" /><circle cx="672" cy="689" r="6.5" /><circle cx="761" cy="636" r="6.5" /><circle cx="792" cy="618" r="5" />
        </g>
        <L d="M234,970 V978 M378,922 V930 M526,800 V808 M672,678 V686 M761,625 V632" />
        <circle cx="153" cy="965" r="6" fill={OR} stroke="#000" strokeWidth="1.4" />
        <L strokeWidth="2" d="M135,977 V985 H150 L157,972" />
        <R x="23" y="1336" w="12" h="16" stroke="#000" />
        <R x="1352" y="1216" w="18" h="17" f={OR} stroke="#000" />
        <L strokeWidth="1.6" d="M1352,1218 L1344,1208 M1352,1231 L1344,1240" />
        <L d="M985,827 V262 H1230 V827 M1001,827 V278 H1216 V827" />
        <L {...Dash} d="M1216,280 L1001,545 M1001,555 L1216,827" />
        <R x="985" y="954" w="245" h="564" stroke="#000" />
        <R x="1001" y="970" w="215" h="548" stroke="#000" />
        <L {...Dash} d="M1216,972 L1001,1237 M1001,1247 L1216,1518" />
      </g>

      <g transform={Z9}>
        <L d="M62,677 V1365 M332,677 V1365" />
        <R x="78" y="694" w="238" h="171" stroke="#000" />
        <R x="78" y="890" w="238" h="194" stroke="#000" />
        <R x="88" y="901" w="217" h="171" stroke="#000" />
        <L {...Dash} d="M80,895 L197,1087 L314,895" />
        <R x="78" y="1110" w="238" h="172" stroke="#000" />
        <R x="78" y="1306" w="238" h="59" stroke="#000" />
        <L d="M332,704 H395 M338,677 V704 M350,677 V704 M382,677 V704 M395,778 V1365" />
        <R x="395" y="677" w="26" h="83" f={OR} stroke="#000" />
        <R x="395" y="760" w="26" h="18" f={OR} stroke="#000" />
        <R x="414" y="778" w="7" h="587" f={OR} stroke="#000" />
        <L d="M408,632 H415 M408,638 H415" />
        <L strokeWidth="2" d="M320,648 H331 M322,648 V654" />
        <L d="M286,157 L278,155 V45 L1420,1065" />
        <L stroke="#888" d="M286,57 L1412,1058" />
        <L d="M1420,1065 V2118" />
        <R x="422" y="835" w="540" h="8" stroke="#000" />
        <R x="423" y="843" w="538" h="497" stroke="#000" strokeWidth="2.2" />
        <R x="431" y="853" w="255" h="477" stroke="#000" />
        <R x="697" y="853" w="255" h="477" stroke="#000" />
        <L d="M691,843 V1340 M422,1340 V1365 M440,1340 V1365 M943,1340 V1365 M962,1340 V1365" />
        <ellipse cx="680" cy="1121" rx="4" ry="4" fill="#222" stroke="none" />
        <ellipse cx="703" cy="1121" rx="4" ry="4" fill="#222" stroke="none" />
      </g>

      <g transform={Z10}>
        <L d="M62,181 H295 V787" />
        <R x="73" y="196" w="211" h="591" stroke="#000" />
        <L stroke="#555" d="M73,196 L282,490 L73,787" />
        <R x="384" y="262" w="6" h="503" stroke="#000" />
        <R x="1187" y="557" w="20" h="206" f={OR} stroke="#000" />
        <R x="1197" y="763" w="125" h="24" f={OR} stroke="none" />
        <R x="1308" y="557" w="14" h="230" f={OR} stroke="#000" />
        <R x="1207" y="557" w="101" h="208" stroke="#000" />
        <R x="1213" y="557" w="79" h="50" stroke="#000" />
        <R x="785" y="763" w="412" h="24" stroke="#000" />
        <L d="M785,763 V211 H1055 V572 H1187 M1055,557 H1322" />
        <L d="M919,634 H1055" />
        <L d="M1287,97 V331 H1322" />
        <L stroke="#555" d="M1287,331 L1215,395" />
        <R x="1205" y="395" w="117" h="8" stroke="#000" />
        <L strokeWidth="2" d="M1185,605 V730 M1181,640 H1186" />
        <L d="M516,97 V787 M758,97 V787 M780,97 V787 M516,124 H758 M516,139 H758 M735,139 V787 M735,205 H758" />
        <L d="M516,205 H680 V660 M516,661 H680" />
        <R x="640" y="595" w="118" h="13" stroke="#000" />
        <L d="M660,608 V787 M672,608 V787 M672,620 H680" />
        <L strokeWidth="2" d="M698,570 H758 M698,570 V787 M704,570 V787 M757,570 V787" />
        <L d="M704,586 H757 M704,600 H757 M704,614 H757" />
        <L strokeWidth="2.4" d="M704,632 H757 M684,687 H757" />
        <L d="M704,648 H757 M704,700 H757 M690,690 V787 M696,690 V787 M690,775 H704" />
        <L stroke="#666" strokeWidth="1.6" d="M527,570 L540,680 L535,787 M533,570 L547,680 L541,787" />
        <L strokeWidth="2.2" d="M537,687 H635 M625,689 V787 M631,689 V787" />
        <L d="M540,700 H625 M540,765 H625 M540,775 H625" />
        <L stroke="#333" strokeDasharray="12 6" d="M542,483 V463 H632" />
        <L stroke="#333" d="M617,455 L635,464 L617,473" />
      </g>

      <Axis x="595" /><Axis x="1059" /><Axis x="1209" /><Axis x="1570" />

      <line x1="237" y1="862" x2="1654" y2="862" stroke="#000" strokeDasharray="62 7 10 7" />
      <rect x="237" y="866" width="1417" height="82" fill="#5a656b" stroke="none" />
      <rect x="237" y="866" width="250" height="82" fill="#555d60" stroke="none" />
      <line x1="237" y1="948" x2="1654" y2="948" stroke="#000" />
      <line x1="237" y1="866" x2="1654" y2="866" stroke="#000" />
      <path d="M568,858 L576,866 M576,858 L568,866" stroke="#777" strokeWidth="1.6" />

      <path d="M327,291 V359 M309,342 H401 M309,368 H401 M327,368 V385" />
      <Lev y={342} /><Lev y={368} />
      <path d="M327,546 V632 M309,598 H401 M309,615 H401" />
      <Lev y={598} /><Lev y={615} />
      <path d="M327,794 V862 M309,845 H359" />
      <path d="M309,845 H327 V862 Z" fill="#000" stroke="none" />
      <text x="336" y="340" {...Txt}>+5.900</text>
      <text x="336" y="365" {...Txt}>+5.600</text>
      <text x="336" y="594" {...Txt}>+2.900</text>
      <text x="336" y="612" {...Txt}>+2.700</text>
      <text x="336" y="842" {...Txt}>±0</text>

      <path d="M485.6,353 V868" />
      <Dot y={359} /><Dot y={385} /><Dot y={615} /><Dot y={632} /><Dot y={862} tick={false} />
      <text transform="translate(481.5 407) rotate(-90)" textAnchor="middle" {...Txt}>300</text>
      <text transform="translate(481.5 500) rotate(-90)" textAnchor="middle" {...Txt}>2.700</text>
      <text transform="translate(481.5 653) rotate(-90)" textAnchor="middle" {...Txt}>200</text>
      <text transform="translate(481.5 748) rotate(-90)" textAnchor="middle" {...Txt}>2.700</text>
      <path d="M487,113 V129" stroke="#444" strokeWidth="2" />

      <rect x="293.5" y="219.5" width="152" height="788.5" stroke="#fff" />
      <rect x="293.5" y="219.5" width="152" height="788.5" stroke="#000" strokeDasharray="6 5" />
    </svg>
  );
}

const Handle = ({ cl, dash }) => (
  <div className={`absolute flex items-center justify-center ${cl}`}>
    <div className={dash} />
  </div>
);

export default function App() {
  return (
    <div className={`relative w-[1654px] h-[1032px] overflow-hidden bg-[#bfcbe3] flex flex-col ${F}`}>
      <MenuBar />
      <div className="flex-1 flex flex-col min-h-0 rounded-t-[6px] overflow-hidden">
        <div className="h-[29px] bg-[#ededed] border-b border-[#cfcfcf] flex items-center relative shrink-0">
          <div className="ml-[5px] w-[12px] h-[12px] rounded-full bg-[#ff5f57]" />
          <div className="ml-[8px] w-[12px] h-[12px] rounded-full bg-[#febc2e]" />
          <div className="ml-[8px] w-[12px] h-[12px] rounded-full bg-[#28c840]" />
          <svg width="13" height="16" viewBox="0 0 13 16" fill="#fff" stroke="#aaa" className="ml-[828px]"><path d="M1 1 H9 L12 4 V15 H1 Z" /><path d="M3 4 H7 M3 8 H7 M6 11 H9" stroke="#3a78d8" strokeWidth="1.5" /></svg>
          <span className="ml-[7px] text-[13.2px] font-bold text-[#4a4a4a] whitespace-nowrap">Cursushuis_TT.pln</span>
        </div>
        <Toolbar />
        <div className="flex-1 flex min-h-0">
          <Panel />
          <Toolbox />
          <div className="flex-1 flex flex-col min-w-0">
            <Tabs />
            <div className="relative flex-1 bg-white overflow-hidden">
              <Drawing />
              <Handle cl="bg-[#f0f0f0] left-[693px] top-0 w-[31px] h-[15px]" dash="w-[24px] border-t border-dashed border-[#f0a060] mt-[6px]" />
              <Handle cl="bg-[#f0f0f0] left-[693px] bottom-0 w-[31px] h-[15px]" dash="w-[24px] border-t border-dashed border-[#f0a060]" />
              <Handle cl="bg-[#e5e5e5] left-[3px] top-[446px] w-[14px] h-[31px] rounded-[3px]" dash="h-[24px] border-l border-dashed border-[#f0a060]" />
              <Handle cl="bg-[#f0f0f0] right-0 top-[446px] w-[14px] h-[31px] rounded-l-[3px]" dash="h-[24px] border-l border-dashed border-[#f0a060]" />
            </div>
          </div>
        </div>
      </div>
      <span className="absolute left-[235px] top-[112px] text-[43px] leading-[46px] font-bold text-[#ff2a1a] font-['DejaVu_Sans']">1</span>
      <span className="absolute left-[304px] top-[223px] text-[43px] leading-[46px] font-bold text-[#ff2a1a] font-['DejaVu_Sans']">2</span>
      <span className="absolute left-[141px] top-[936px] text-[43px] leading-[46px] font-bold text-[#ff2a1a] font-['DejaVu_Sans']">3</span>
    </div>
  );
}
